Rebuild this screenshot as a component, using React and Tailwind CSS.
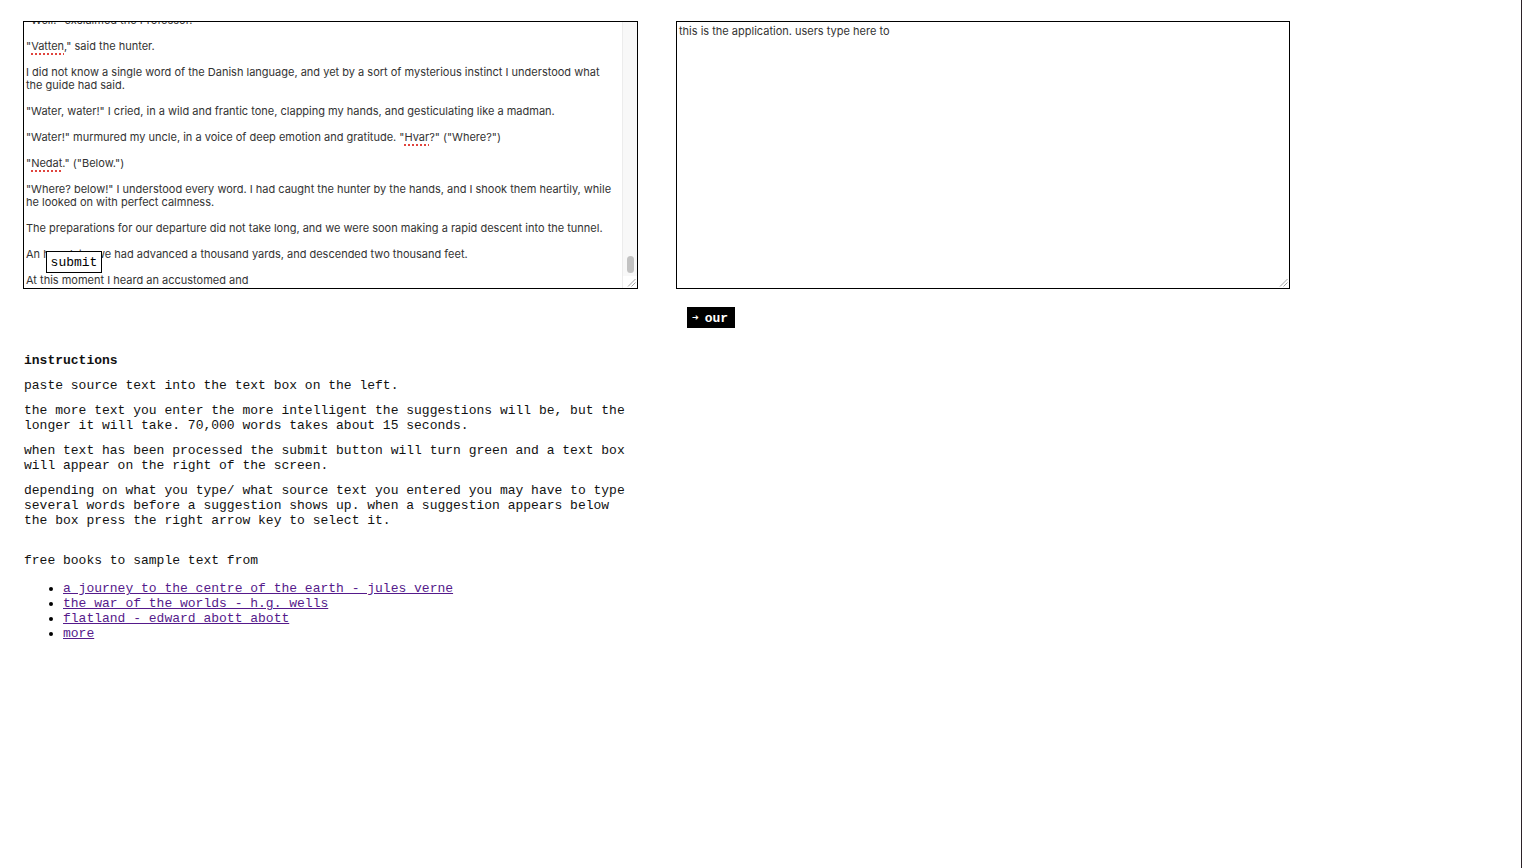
import React from "react";

const sans = { fontFamily: "Inter, 'Liberation Sans', sans-serif" };
const mono = { fontFamily: "'Liberation Mono', 'Courier New', monospace" };

function Sp({ children }) {
  return (
    <span className="underline decoration-dotted decoration-[#e0443e] decoration-[1.5px] underline-offset-[3px]">
      {children}
    </span>
  );
}

function Grip() {
  return (
    <svg width="9" height="9" viewBox="0 0 9 9" className="block">
      <line x1="8.5" y1="1" x2="1" y2="8.5" stroke="#8a8a8a" strokeWidth="0.8" />
      <line x1="8.5" y1="4.5" x2="4.5" y2="8.5" stroke="#8a8a8a" strokeWidth="0.8" />
    </svg>
  );
}

function Para({ children, last }) {
  return <div className={last ? "" : "mb-[13px]"}>{children}</div>;
}

export default function App() {
  return (
    <div className="h-[868px] w-full bg-white border-r border-[#2b2228] flex gap-[38px] pl-[23px] pt-[21px]">
      {/* left column */}
      <div className="w-[615px] shrink-0 flex flex-col">
        <div className="relative h-[268px] border border-black flex overflow-hidden">
          <div
            className="flex-1 overflow-hidden pl-[2px] text-[11px] leading-[13px] text-[#333] whitespace-pre"
            style={sans}
          >
            <div className="-mt-[8px]">
              <Para>"Well!" exclaimed the Professor.</Para>
              <Para>"<Sp>Vatten</Sp>," said the hunter.</Para>
              <Para>
                I did not know a single word of the Danish language, and yet by a sort of mysterious instinct I understood what
                {"\n"}the guide had said.
              </Para>
              <Para>"Water, water!" I cried, in a wild and frantic tone, clapping my hands, and gesticulating like a madman.</Para>
              <Para>"Water!" murmured my uncle, in a voice of deep emotion and gratitude. "<Sp>Hvar</Sp>?" ("Where?")</Para>
              <Para>"<Sp>Nedat</Sp>." ("Below.")</Para>
              <Para>
                "Where? below!" I understood every word. I had caught the hunter by the hands, and I shook them heartily, while
                {"\n"}he looked on with perfect calmness.
              </Para>
              <Para>The preparations for our departure did not take long, and we were soon making a rapid descent into the tunnel.</Para>
              <Para>An hour later we had advanced a thousand yards, and descended two thousand feet.</Para>
              <Para last>At this moment I heard an accustomed and</Para>
            </div>
          </div>
          {/* scrollbar */}
          <div className="w-[15px] shrink-0 bg-[#f8f8f8] border-l border-[#ececec] flex flex-col justify-end items-center">
            <div className="w-[7px] h-[17px] rounded-full bg-[#c2c2c2] mb-[3px]" />
            <div className="w-full h-[12px] bg-white flex items-end justify-end pr-[1px] pb-[1px]">
              <Grip />
            </div>
          </div>
          <button
            className="absolute left-[22px] top-[229px] h-[22px] w-[56px] border border-black bg-white text-[13px] leading-[13px] text-black"
            style={mono}
          >
            submit
          </button>
        </div>

        <div className="mt-[64px] pl-[1px] text-[13px] leading-[15px] text-[#111]" style={mono}>
          <div className="font-bold mb-[10px]">instructions</div>
          <p className="mb-[10px]">paste source text into the text box on the left.</p>
          <p className="mb-[10px]">
            the more text you enter the more intelligent the suggestions will be, but the
            <br />
            longer it will take. 70,000 words takes about 15 seconds.
          </p>
          <p className="mb-[10px]">
            when text has been processed the submit button will turn green and a text box
            <br />
            will appear on the right of the screen.
          </p>
          <p>
            depending on what you type/ what source text you entered you may have to type
            <br />
            several words before a suggestion shows up. when a suggestion appears below
            <br />
            the box press the right arrow key to select it.
          </p>
          <p className="mt-[25px]">free books to sample text from</p>
          <ul className="mt-[13px] list-disc pl-[39px] text-[#551a8b]">
            <li className="marker:text-black">
              <a className="underline" href="#">a journey to the centre of the earth - jules verne</a>
            </li>
            <li className="marker:text-black">
              <a className="underline" href="#">the war of the worlds - h.g. wells</a>
            </li>
            <li className="marker:text-black">
              <a className="underline" href="#">flatland - edward abott abott</a>
            </li>
            <li className="marker:text-black">
              <a className="underline" href="#">more</a>
            </li>
          </ul>
        </div>
      </div>

      {/* right column */}
      <div className="w-[614px] shrink-0 flex flex-col">
        <div className="h-[268px] border border-black flex flex-col justify-between">
          <div className="pl-[2px] pt-[3px] text-[11px] leading-[13px] text-[#333]" style={sans}>
            this is the application. users type here to
          </div>
          <div className="flex justify-end pr-[1px] pb-[1px]">
            <Grip />
          </div>
        </div>
        <div className="mt-[18px] ml-[11px] flex">
          <div
            className="flex items-center h-[21px] w-[48px] pl-[5px] pt-[1px] bg-black text-white text-[13px] leading-[13px] font-bold"
            style={mono}
          >
            <span className="mr-[6px] text-[11px]">➜</span>our
          </div>
        </div>
      </div>
    </div>
  );
}
